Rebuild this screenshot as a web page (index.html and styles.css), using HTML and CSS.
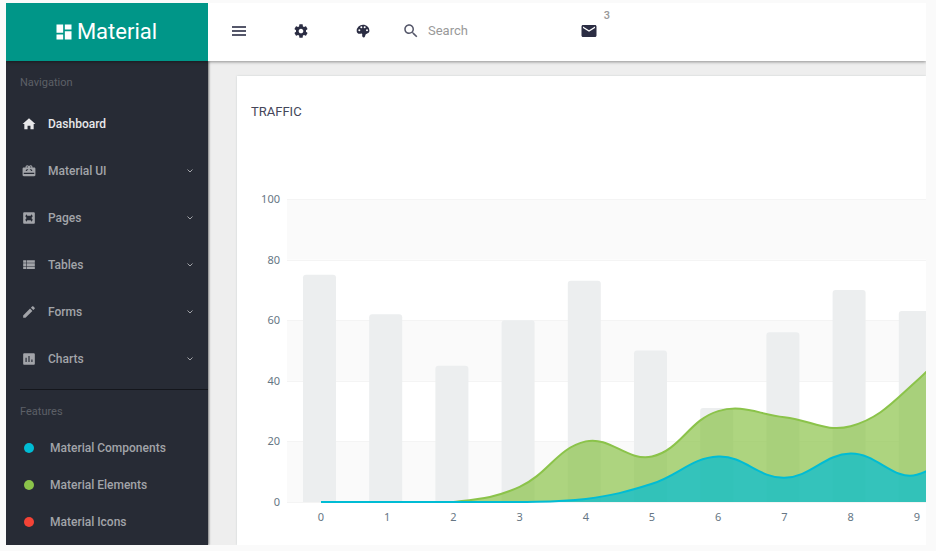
FILE: index.html
```
<!DOCTYPE html>
<html lang="en">
<head>
    <meta charset="UTF-8">
    <meta name="viewport" content="width=device-width, initial-scale=1.0">
    <title>Material Dashboard</title>
    <link rel="stylesheet" href="styles.css">
</head>
<body>
    <div class="app">
        <header class="topbar">
            <a href="#" class="brand">
                <svg class="brand-icon" viewBox="0 0 24 24"><path d="M3 13h8V3H3v10zm0 8h8v-6H3v6zm10 0h8V11h-8v10zm0-18v6h8V3h-8z"/></svg>
                <span>Material</span>
            </a>
            <div class="tools">
                <button type="button" class="tool" aria-label="Menu">
                    <svg class="menu-icon" viewBox="0 0 20 20"><path d="M3 5h14v2H3zM3 9h14v2H3zM3 13h14v2H3z"/></svg>
                </button>
                <button type="button" class="tool" aria-label="Settings">
                    <svg viewBox="0 0 24 24"><path d="M19.43 12.98c.04-.32.07-.64.07-.98s-.03-.66-.07-.98l2.11-1.65c.19-.15.24-.42.12-.64l-2-3.46c-.12-.22-.39-.3-.61-.22l-2.49 1c-.52-.4-1.08-.73-1.69-.98l-.38-2.65C14.46 2.18 14.25 2 14 2h-4c-.25 0-.46.18-.49.42l-.38 2.65c-.61.25-1.17.59-1.69.98l-2.49-1c-.23-.09-.49 0-.61.22l-2 3.46c-.13.22-.07.49.12.64l2.11 1.65c-.04.32-.07.65-.07.98s.03.66.07.98l-2.11 1.65c-.19.15-.24.42-.12.64l2 3.46c.12.22.39.3.61.22l2.49-1c.52.4 1.08.73 1.69.98l.38 2.65c.03.24.24.42.49.42h4c.25 0 .46-.18.49-.42l.38-2.65c.61-.25 1.17-.59 1.69-.98l2.49 1c.23.09.49 0 .61-.22l2-3.46c.12-.22.07-.49-.12-.64l-2.11-1.65zM12 15.5c-1.93 0-3.5-1.57-3.5-3.5s1.57-3.5 3.5-3.5 3.5 1.57 3.5 3.5-1.57 3.5-3.5 3.5z"/></svg>
                </button>
                <button type="button" class="tool" aria-label="Theme">
                    <svg viewBox="0 0 24 24"><path d="M12 2.500a9.500 9.500 0 0 0-9.500 9.500c0 2.600 1.900 4.300 4.200 4.300 1.700 0 2.700-.9 3.700-.3 1 .6.200 2.200.4 3.600.2 1.300 1.100 2.400 2.500 2.200 1.500-.2 1.700-1.800 2.100-3.100.6-1.900 1.900-2.300 3.500-3.200 1.700-.9 2.700-2 2.700-4C21.600 6.300 17.200 2.500 12 2.500zM6.500 12.500a1.500 1.500 0 1 1 0-3 1.500 1.500 0 0 1 0 3zm3-4.500a1.500 1.500 0 1 1 0-3 1.500 1.500 0 0 1 0 3zm5 0a1.500 1.500 0 1 1 0-3 1.500 1.500 0 0 1 0 3zm3.500 4.500a1.500 1.500 0 1 1 0-3 1.500 1.500 0 0 1 0 3z"/></svg>
                </button>
                <form class="search">
                    <label for="search" aria-label="Search">
                        <svg viewBox="0 0 24 24"><path d="M15.500 14h-.79l-.28-.27C15.410 12.590 16 11.110 16 9.500 16 5.910 13.090 3 9.500 3S3 5.910 3 9.500 5.910 16 9.500 16c1.610 0 3.090-.59 4.230-1.570l.27.28v.79l5 4.990L20.490 19l-4.990-5zm-6 0C7.010 14 5 11.990 5 9.500S7.010 5 9.500 5 14 7.010 14 9.500 11.990 14 9.500 14z"/></svg>
                    </label>
                    <input type="text" id="search" placeholder="Search">
                </form>
                <button type="button" class="tool mail" aria-label="Messages">
                    <svg viewBox="0 0 24 24"><path d="M20 4H4c-1.100 0-1.990.9-1.990 2L2 18c0 1.100.9 2 2 2h16c1.100 0 2-.9 2-2V6c0-1.100-.9-2-2-2zm0 4l-8 5-8-5V6l8 5 8-5v2z"/></svg>
                    <span class="badge">3</span>
                </button>
            </div>
        </header>

        <nav class="sidebar">
            <h2 class="side-title">Navigation</h2>
            <ul class="menu">
                <li><a href="#" class="active">
                    <svg class="icon" viewBox="0 0 24 24"><path d="M9.500 21v-6h5v6h5.500v-9h3L12 2 1 12h3v9z"/></svg>
                    <span>Dashboard</span>
                </a></li>
                <li><a href="#">
                    <svg class="icon" viewBox="0 0 24 24"><path fill-rule="evenodd" d="M21 6h-3c0-2.500-1.300-4-3-4-1.300 0-2.300.6-3 1.700C11.300 2.600 10.300 2 9 2 7.300 2 6 3.500 6 6H3c-1.100 0-2 .9-2 2v11c0 1.100.9 2 2 2h18c1.100 0 2-.9 2-2V8c0-1.100-.9-2-2-2zM9 4a1 1 0 1 1 0 2 1 1 0 0 1 0-2zm6 0a1 1 0 1 1 0 2 1 1 0 0 1 0-2zM3 15h18v2H3zM8 9l-2 3h2l3-3zm8 0l2 3h-2l-3-3z"/></svg>
                    <span>Material UI</span>
                    <svg class="arrow" viewBox="0 0 10 10"><path d="M2.500 3.500L5 6l2.500-2.500"/></svg>
                </a></li>
                <li><a href="#">
                    <svg class="icon" viewBox="0 0 24 24"><path fill-rule="evenodd" d="M4 2h16c1.100 0 2 .9 2 2v16c0 1.100-.9 2-2 2H4c-1.100 0-2-.9-2-2V4c0-1.100.9-2 2-2zM9 8L8 5.500 6 8v2l2 2-2 2v2l2 2.500L9 16h6l1 2.500 2-2.500v-2l-2-2 2-2V8l-2-2.500L15 8z"/></svg>
                    <span>Pages</span>
                    <svg class="arrow" viewBox="0 0 10 10"><path d="M2.500 3.500L5 6l2.500-2.500"/></svg>
                </a></li>
                <li><a href="#">
                    <svg class="icon" viewBox="0 0 24 24"><path d="M2 4h5v4H2zM2 9h5v5H2zM2 15h5v4H2zM8 4h14v4H8zM8 9h14v5H8zM8 15h14v4H8z"/></svg>
                    <span>Tables</span>
                    <svg class="arrow" viewBox="0 0 10 10"><path d="M2.500 3.500L5 6l2.500-2.500"/></svg>
                </a></li>
                <li><a href="#">
                    <svg class="icon" viewBox="0 0 24 24"><path d="M2 18v4h4L17.800 10.200l-4-4L2 18zM21.700 6.300c.4-.4.4-1 0-1.400l-2.600-2.600c-.4-.4-1-.4-1.400 0L15.300 4.700l4 4 2.400-2.400z"/></svg>
                    <span>Forms</span>
                    <svg class="arrow" viewBox="0 0 10 10"><path d="M2.500 3.500L5 6l2.500-2.500"/></svg>
                </a></li>
                <li><a href="#">
                    <svg class="icon" viewBox="0 0 24 24"><path fill-rule="evenodd" d="M4 2h16c1.100 0 2 .9 2 2v16c0 1.100-.9 2-2 2H4c-1.100 0-2-.9-2-2V4c0-1.100.9-2 2-2zM6 10v7h2v-7zM11 7v10h2V7zM16 13v4h2v-4z"/></svg>
                    <span>Charts</span>
                    <svg class="arrow" viewBox="0 0 10 10"><path d="M2.500 3.500L5 6l2.500-2.500"/></svg>
                </a></li>
            </ul>
            <hr>
            <h2 class="side-title">Features</h2>
            <ul class="features">
                <li><a href="#"><i class="dot cyan"></i>Material Components</a></li>
                <li><a href="#"><i class="dot green"></i>Material Elements</a></li>
                <li><a href="#"><i class="dot red"></i>Material Icons</a></li>
            </ul>
        </nav>

        <main class="content">
            <section class="card">
                <h1>TRAFFIC</h1>
                <svg id="chart" class="chart" role="img" aria-label="Traffic chart"></svg>
            </section>
        </main>
    </div>

    <script src="chart.js"></script>
</body>
</html>
```
FILE: styles.css
```
* {
    box-sizing: border-box;
}

body {
    margin: 0;
    padding: 3px 10px 6px 6px;
    background: #fafafa;
    font-family: Roboto, sans-serif;
    font-size: 12px;
    line-height: 16px;
}

a {
    color: inherit;
    text-decoration: none;
}

ul {
    list-style: none;
    margin: 0;
    padding: 0;
}

svg {
    fill: currentColor;
    flex-shrink: 0;
}

.app {
    display: grid;
    grid-template-columns: 202px minmax(0, 1fr);
    overflow: hidden;
}

/* Top bar */
.topbar {
    grid-column: 1 / 3;
    display: flex;
    height: 58px;
    background: #fff;
    box-shadow: 0 1px 3px rgba(0, 0, 0, 0.4);
    position: relative;
    z-index: 2;
}

.brand {
    width: 202px;
    padding-right: 3px;
    display: flex;
    align-items: center;
    justify-content: center;
    gap: 3px;
    background: #009688;
    color: #fff;
    font-size: 22px;
    line-height: 28px;
}

.brand-icon {
    width: 20px;
    height: 20px;
}

.tools {
    flex: 1;
    display: flex;
    align-items: center;
    height: 56px;
    color: #2b2d43;
}

.tool {
    width: 62px;
    height: 56px;
    padding: 0;
    border: 0;
    background: none;
    color: inherit;
    display: flex;
    align-items: center;
    justify-content: center;
    cursor: pointer;
}

.tool svg,
.search svg {
    width: 16px;
    height: 16px;
    display: block;
}

.tool .menu-icon {
    width: 20px;
    height: 20px;
    color: #55576a;
}

.search {
    display: flex;
    align-items: center;
    gap: 8px;
    width: 164px;
    padding-left: 8px;
    color: #55576a;
}

.search svg {
    width: 18px;
    height: 18px;
}

.search input {
    flex: 1;
    min-width: 0;
    border: 0;
    padding: 0;
    outline: 0;
    background: none;
    font: 13px/16px Roboto, sans-serif;
}

.search input::placeholder {
    color: #999;
    opacity: 1;
}

.mail {
    position: relative;
}

.mail svg {
    width: 18px;
    height: 18px;
}

.badge {
    position: absolute;
    top: 5px;
    right: 10px;
    color: #999;
    font: 500 11px/16px Roboto, sans-serif;
}

/* Sidebar */
.sidebar {
    background: #272b35;
    color: #a2a4a9;
    font-weight: 500;
    box-shadow: 1px 0 2px rgba(0, 0, 0, 0.5);
    position: relative;
    z-index: 1;
}

.side-title {
    margin: 0;
    padding: 14px 14px 9px;
    color: #5d6067;
    font-size: 11px;
    line-height: 16px;
    font-weight: 400;
}

.menu a {
    display: flex;
    align-items: center;
    gap: 12px;
    height: 47px;
    padding: 0 13px 0 16px;
}

.menu .active {
    color: #e8e8ea;
}

.icon {
    width: 14px;
    height: 14px;
}

.arrow {
    width: 10px;
    height: 10px;
    margin-left: auto;
    fill: none;
    stroke: currentColor;
}

.sidebar hr {
    margin: 7px 0 0 14px;
    border: 0;
    border-top: 1px solid #14161c;
}

.features a {
    display: flex;
    align-items: center;
    gap: 16px;
    height: 37px;
    padding-left: 18px;
}

.dot {
    width: 10px;
    height: 10px;
    border-radius: 50%;
}

.cyan {
    background: #00bcd4;
}

.green {
    background: #8bc34a;
}

.red {
    background: #f44336;
}

/* Content */
.content {
    background: #eee;
    padding: 15px 0 0 29px;
}

.card {
    background: #fff;
    box-shadow: 0 0 2px rgba(0, 60, 60, 0.15);
    padding-top: 28px;
}

.card h1 {
    margin: 0 0 50px 14px;
    color: #44465a;
    font-size: 13px;
    line-height: 16px;
    font-weight: 400;
}

.chart {
    display: block;
    width: 100%;
    height: 375px;
}

.band {
    fill: #fafafa;
}

.grid-line {
    stroke: #f4f4f4;
}

.bar {
    fill: #eceeef;
}

.axis {
    fill: #667684;
    font: 11px "Noto Sans", sans-serif;
}

.axis-y {
    text-anchor: end;
}

.axis-x {
    text-anchor: middle;
}

.area-elements {
    fill: #8bc34a;
    fill-opacity: 0.7;
}

.line-elements {
    fill: none;
    stroke: #8bc34a;
    stroke-width: 2;
}

.area-components {
    fill: #00bcd4;
    fill-opacity: 0.7;
}

.line-components {
    fill: none;
    stroke: #00bcd4;
    stroke-width: 2;
}
```
FILE: chart.js
```
var bars = [75, 62, 45, 60, 73, 50, 31, 56, 70, 63];
var elements = [0, 0, 0, 5, 20, 15, 30, 28, 25, 40, 64];
var components = [0, 0, 0, 0, 1, 6, 15, 8, 16, 9, 28];

var left = 50;
var top0 = 29;
var height = 303;
var step = 66.2;
var tension = 0.4;

function px(i) { return left + 34 + i * step; }
function py(v) { return top0 + height - v * height / 100; }

var chart = document.getElementById("chart");

function add(name, attrs, text) {
    var el = document.createElementNS("http://www.w3.org/2000/svg", name);
    for (var key in attrs) {
        el.setAttribute(key, attrs[key]);
    }
    if (text !== undefined) {
        el.textContent = text;
    }
    chart.appendChild(el);
}

// smooth curve through all the points, never below the zero line
function spline(values) {
    var p = values.map(function(v, i) { return [px(i), py(v)]; });
    var ctrl = p.map(function(c, i) {
        var a = p[i - 1] || c;
        var b = p[i + 1] || c;
        var d1 = Math.hypot(c[0] - a[0], c[1] - a[1]);
        var d2 = Math.hypot(b[0] - c[0], b[1] - c[1]);
        var f1 = tension * d1 / (d1 + d2);
        var f2 = tension - f1;
        return {
            before: [c[0] - f1 * (b[0] - a[0]), Math.min(py(0), c[1] - f1 * (b[1] - a[1]))],
            after: [c[0] + f2 * (b[0] - a[0]), Math.min(py(0), c[1] + f2 * (b[1] - a[1]))]
        };
    });
    var d = "M" + p[0];
    for (var i = 1; i < p.length; i++) {
        d += " C" + ctrl[i - 1].after + " " + ctrl[i].before + " " + p[i];
    }
    return d;
}

// grid bands and y axis
for (var v = 100; v > 0; v -= 40) {
    add("rect", { "class": "band", x: left, y: py(v), width: "100%", height: height / 5 });
}
for (var g = 0; g <= 100; g += 20) {
    var y = Math.round(py(g)) + 0.5;
    add("line", { "class": "grid-line", x1: left, x2: "100%", y1: y, y2: y });
    add("text", { "class": "axis axis-y", x: left - 7, y: Math.round(py(g)) + 4 }, g);
}

// bars and x axis
bars.forEach(function(value, i) {
    var x = px(i) - 18;
    var y = py(value);
    add("path", { "class": "bar", d: "M" + x + " " + py(0) + "V" + (y + 3) + "q0-3 3-3h27q3 0 3 3V" + py(0) + "z" });
    add("text", { "class": "axis axis-x", x: px(i), y: top0 + height + 19 }, i);
});

[["elements", elements], ["components", components]].forEach(function(series) {
    var line = spline(series[1]);
    add("path", { "class": "area-" + series[0], d: line + " V" + py(0) + " H" + px(0) + "z" });
    add("path", { "class": "line-" + series[0], d: line });
});
```
